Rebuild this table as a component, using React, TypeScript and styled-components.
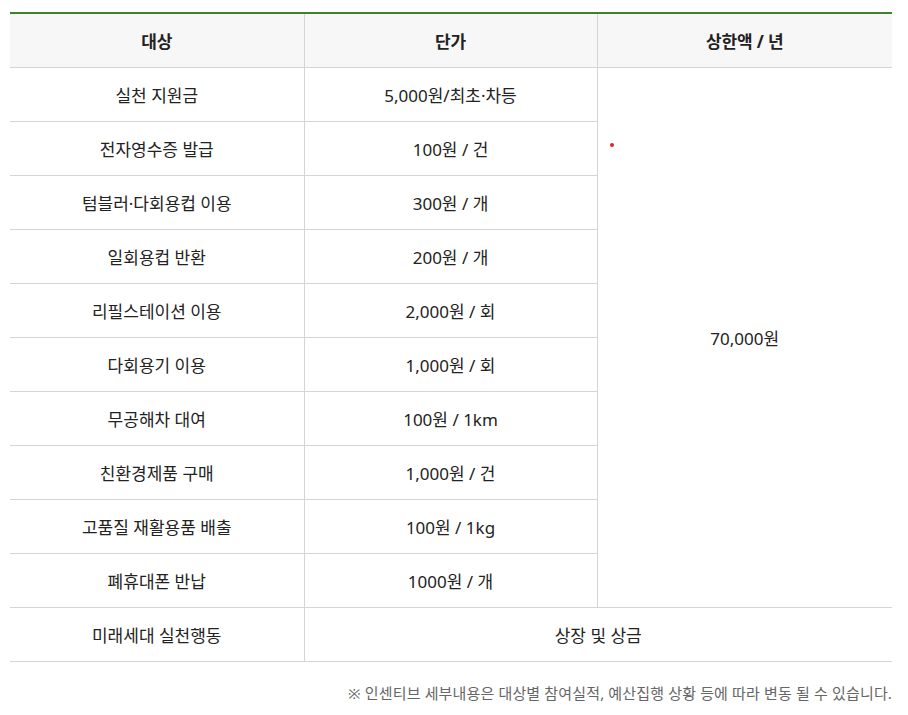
import React from "react";
import styled, { createGlobalStyle } from "styled-components";

interface Item {
  target: string;
  price: string;
}

const items: Item[] = [
  { target: "실천 지원금", price: "5,000원/최초·차등" },
  { target: "전자영수증 발급", price: "100원 / 건" },
  { target: "텀블러·다회용컵 이용", price: "300원 / 개" },
  { target: "일회용컵 반환", price: "200원 / 개" },
  { target: "리필스테이션 이용", price: "2,000원 / 회" },
  { target: "다회용기 이용", price: "1,000원 / 회" },
  { target: "무공해차 대여", price: "100원 / 1km" },
  { target: "친환경제품 구매", price: "1,000원 / 건" },
  { target: "고품질 재활용품 배출", price: "100원 / 1kg" },
  { target: "폐휴대폰 반납", price: "1000원 / 개" },
];

const App: React.FC = () => {
  return (
    <Page>
      <GlobalStyle />
      <Table>
        <colgroup>
          <col style={{ width: 294 }} />
          <col style={{ width: 293 }} />
          <col />
        </colgroup>
        <thead>
          <tr>
            <Th>대상</Th>
            <Th>단가</Th>
            <Th $last>상한액 / 년</Th>
          </tr>
        </thead>
        <tbody>
          {items.map((item, i) => (
            <tr key={item.target}>
              <Td>{item.target}</Td>
              <Td>{item.price}</Td>
              {i === 0 && (
                <LimitCell rowSpan={items.length}>
                  <Dot />
                  70,000원
                </LimitCell>
              )}
            </tr>
          ))}
          <tr>
            <Td>미래세대 실천행동</Td>
            <Td colSpan={2} $last>
              상장 및 상금
            </Td>
          </tr>
        </tbody>
      </Table>
      <Note>※ 인센티브 세부내용은 대상별 참여실적, 예산집행 상황 등에 따라 변동 될 수 있습니다.</Note>
    </Page>
  );
};

export default App;

const GlobalStyle = createGlobalStyle`
  body {
    margin: 0;
    background: #ffffff;
    font-family: "Noto Sans", "Noto Sans CJK KR", sans-serif;
  }
`;

const Page = styled.div`
  padding: 12px 16px 0 10px;
`;

const Table = styled.table`
  width: 100%;
  border-collapse: collapse;
  table-layout: fixed;
  border-top: 2px solid #3f7f31;
  font-size: 17px;
  color: #222222;
`;

const Th = styled.th<{ $last?: boolean }>`
  height: 53px;
  padding: 0;
  background: #f7f7f7;
  font-weight: 700;
  font-size: 17px;
  color: #222222;
  text-align: center;
  border-bottom: 1px solid #d5d5d5;
  border-right: ${(p) => (p.$last ? "none" : "1px solid #d5d5d5")};
  letter-spacing: -0.01em;
`;

const Td = styled.td<{ $last?: boolean }>`
  height: 53px;
  padding: 0;
  text-align: center;
  border-bottom: 1px solid #d5d5d5;
  border-right: ${(p) => (p.$last ? "none" : "1px solid #d5d5d5")};
`;

const LimitCell = styled.td`
  position: relative;
  padding: 0;
  text-align: center;
  border-bottom: 1px solid #d5d5d5;
`;

const Dot = styled.span`
  position: absolute;
  left: 12px;
  top: 75px;
  width: 4px;
  height: 4px;
  border-radius: 50%;
  background: #e52222;
`;

const Note = styled.p`
  margin: 20px 0 0;
  text-align: right;
  font-size: 15px;
  color: #666666;
  letter-spacing: 0.01em;
`;
